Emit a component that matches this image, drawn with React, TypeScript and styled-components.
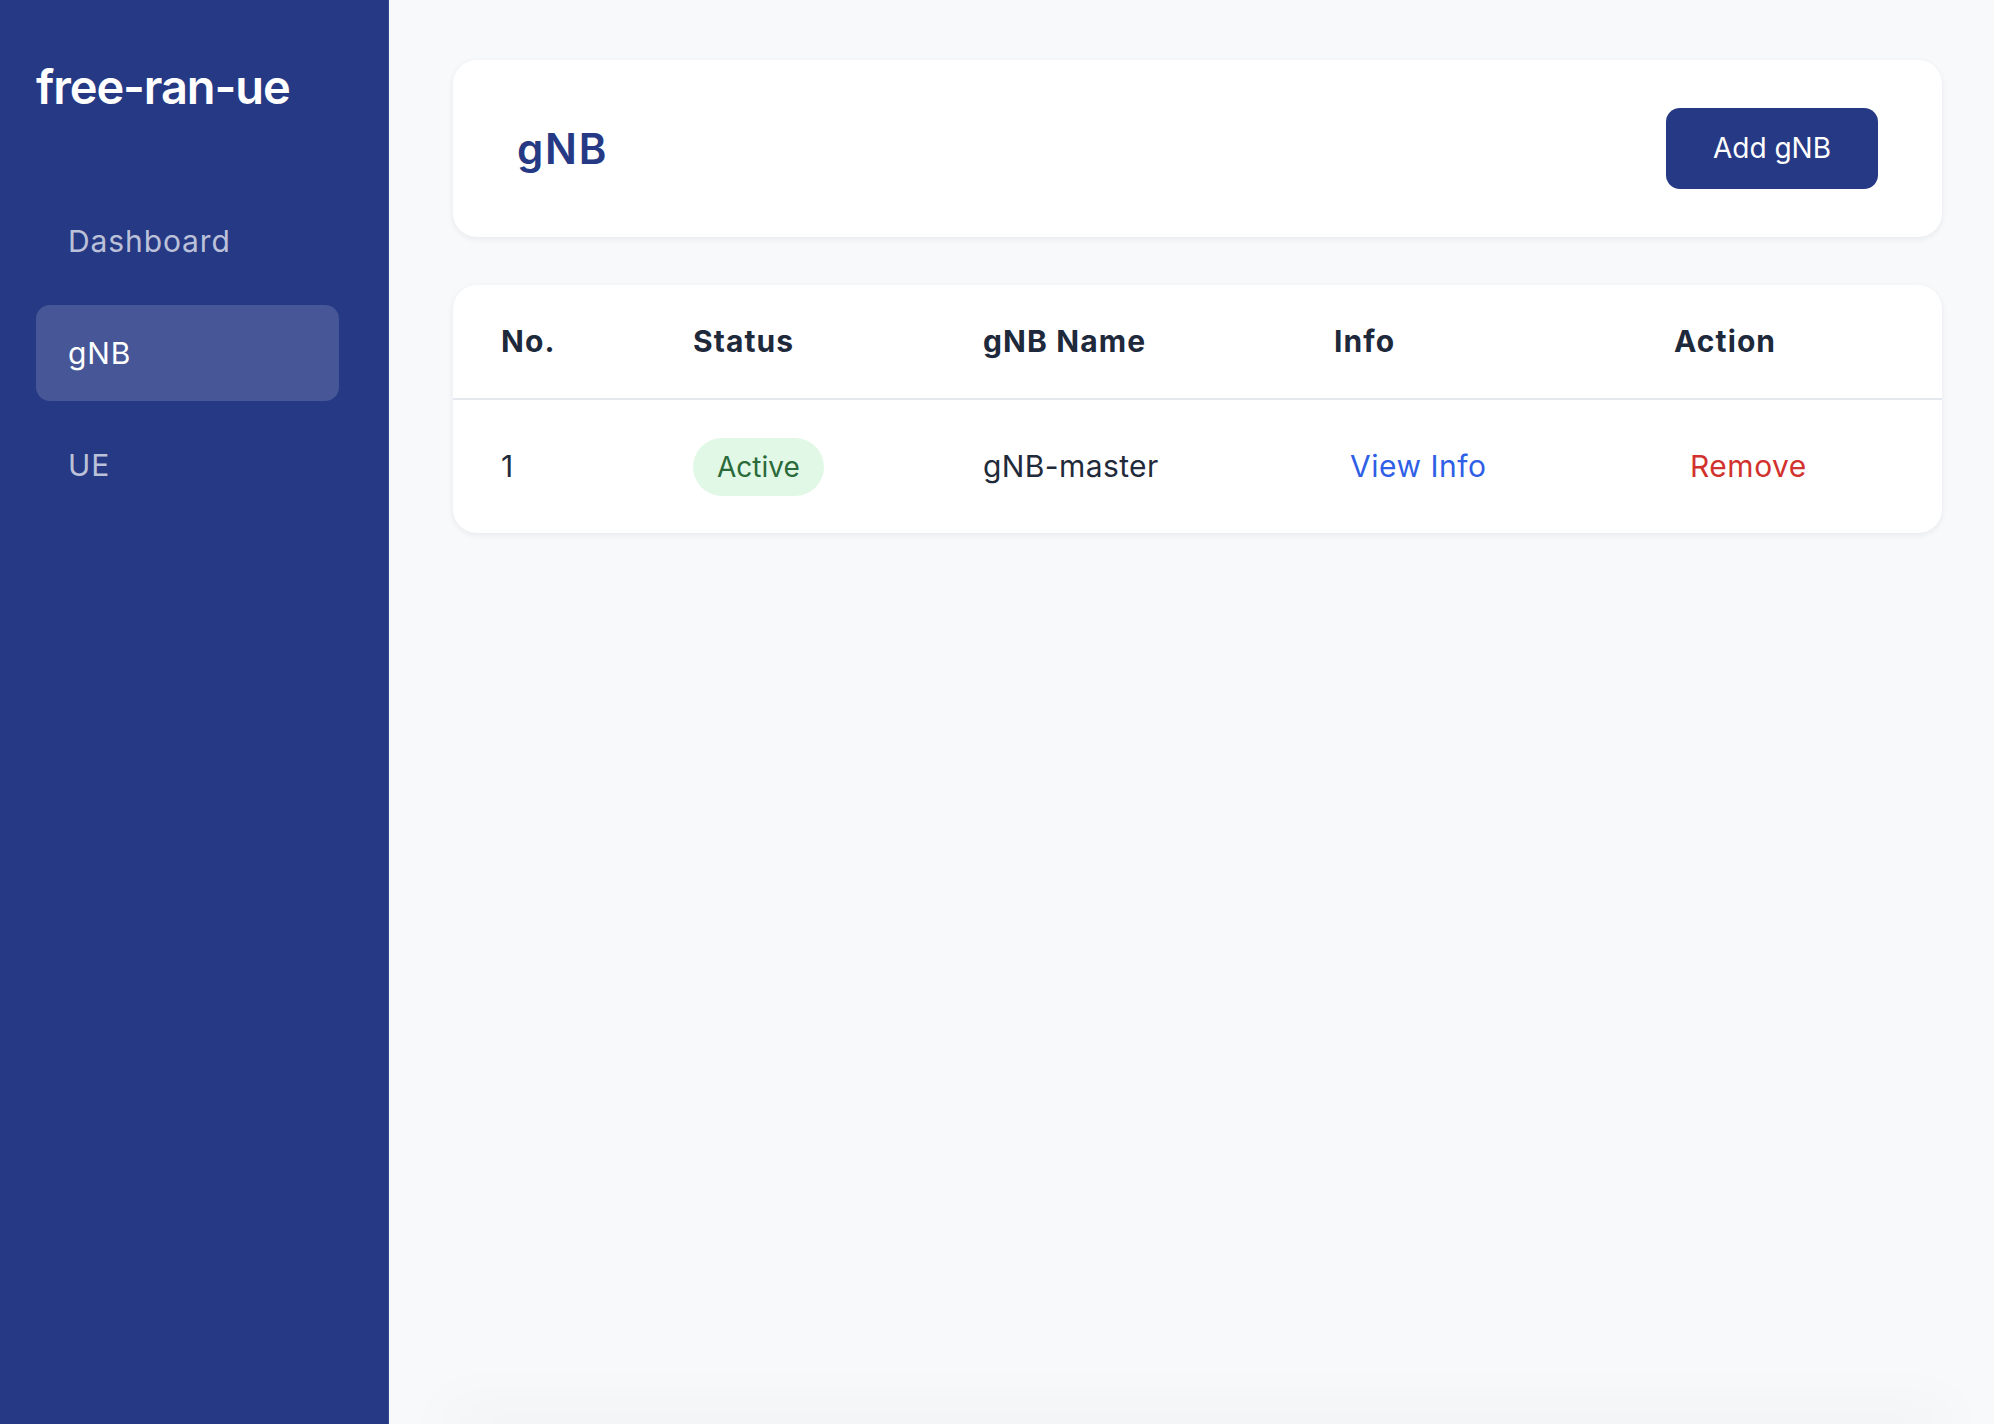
import React from "react";
import styled, { createGlobalStyle } from "styled-components";

const GlobalStyle = createGlobalStyle`
  * { box-sizing: border-box; }
  html, body { margin: 0; padding: 0; }
  body {
    font-family: Inter, "Noto Sans", "Liberation Sans", sans-serif;
    background: #f8f9fb;
    -webkit-font-smoothing: antialiased;
  }
`;

const Layout = styled.div`
  display: flex;
  width: 100vw;
  height: 100vh;
  overflow: hidden;
`;

const Sidebar = styled.aside`
  flex: 0 0 389px;
  background: #263984;
  border-right: 1px solid #34478f;
  padding: 58px 49px 0 36px;
  display: flex;
  flex-direction: column;
`;

const Brand = styled.div`
  color: #ffffff;
  font-size: 47px;
  line-height: 58px;
  font-weight: 600;
  letter-spacing: -1.1px;
  margin-bottom: 77px;
`;

const Nav = styled.nav`
  display: flex;
  flex-direction: column;
  gap: 16px;
`;

const NavItem = styled.a<{ $active?: boolean }>`
  display: block;
  height: 96px;
  padding: 24px 32px;
  font-size: 30px;
  line-height: 48px;
  letter-spacing: 0.9px;
  border-radius: 14px;
  text-decoration: none;
  color: ${(p) => (p.$active ? "#ffffff" : "rgba(255,255,255,0.7)")};
  background: ${(p) => (p.$active ? "rgba(255,255,255,0.15)" : "transparent")};
`;

const Main = styled.main`
  flex: 1;
  display: flex;
  flex-direction: column;
  gap: 48px;
  padding: 60px 52px 0 64px;
  background: #f8f9fb;
  overflow: hidden;
`;

const Card = styled.section`
  background: #ffffff;
  border-radius: 24px;
  box-shadow: 0 2px 6px rgba(15, 23, 42, 0.07);
  flex-shrink: 0;
`;

const HeaderCard = styled(Card)`
  display: flex;
  align-items: center;
  justify-content: space-between;
  padding: 48px 64px 48px 64px;
`;

const PageTitle = styled.h1`
  margin: 0;
  color: #263984;
  font-size: 42px;
  line-height: 50px;
  font-weight: 600;
  letter-spacing: 1.8px;
`;

const PrimaryButton = styled.button`
  border: none;
  background: #263984;
  color: #ffffff;
  font-family: inherit;
  font-size: 28px;
  line-height: 33px;
  font-weight: 400;
  white-space: nowrap;
  padding: 24px 47px;
  border-radius: 14px;
  cursor: pointer;
`;

const COLS = "192px 290px 351px 340px 1fr";

const HeadRow = styled.div`
  display: grid;
  grid-template-columns: ${COLS};
  align-items: center;
  height: 115px;
  border-bottom: 2px solid #e5e8ee;
`;

const HeadCell = styled.div`
  padding: 0 48px;
  font-size: 30px;
  line-height: 45px;
  font-weight: 700;
  letter-spacing: 1.1px;
  color: #1e293b;
`;

const BodyRow = styled.div`
  display: grid;
  grid-template-columns: ${COLS};
  align-items: center;
  height: 133px;
`;

const Cell = styled.div`
  padding: 0 48px;
  font-size: 30px;
  line-height: 45px;
  letter-spacing: 0.4px;
  color: #1f2a3b;
`;

const Badge = styled.span`
  display: inline-block;
  padding: 8px 24px;
  font-size: 28px;
  line-height: 42px;
  letter-spacing: 0;
  border-radius: 999px;
  background: #e1f8e6;
  color: #2b6a3a;
`;

const LinkButton = styled.button<{ $tone: "info" | "danger" }>`
  border: none;
  background: transparent;
  padding: 8px 16px;
  font-family: inherit;
  font-size: 30px;
  line-height: 45px;
  letter-spacing: 0.5px;
  cursor: pointer;
  color: ${(p) => (p.$tone === "info" ? "#2f5fe6" : "#d2322d")};
`;

const BelowFold = styled.div`
  margin-top: auto;
  height: 0;
  flex-shrink: 0;
  box-shadow: 0 0 60px 8px rgba(15, 23, 42, 0.08);
`;

const gnbs = [{ no: 1, status: "Active", name: "gNB-master" }];

export default function App() {
  return (
    <>
      <GlobalStyle />
      <Layout>
        <Sidebar>
          <Brand>free-ran-ue</Brand>
          <Nav>
            <NavItem href="#">Dashboard</NavItem>
            <NavItem href="#" $active>
              gNB
            </NavItem>
            <NavItem href="#">UE</NavItem>
          </Nav>
        </Sidebar>
        <Main>
          <HeaderCard>
            <PageTitle>gNB</PageTitle>
            <PrimaryButton>Add gNB</PrimaryButton>
          </HeaderCard>
          <Card>
            <HeadRow>
              <HeadCell>No.</HeadCell>
              <HeadCell>Status</HeadCell>
              <HeadCell>gNB Name</HeadCell>
              <HeadCell>Info</HeadCell>
              <HeadCell>Action</HeadCell>
            </HeadRow>
            {gnbs.map((g) => (
              <BodyRow key={g.no}>
                <Cell>{g.no}</Cell>
                <Cell>
                  <Badge>{g.status}</Badge>
                </Cell>
                <Cell>{g.name}</Cell>
                <Cell>
                  <LinkButton $tone="info">View Info</LinkButton>
                </Cell>
                <Cell>
                  <LinkButton $tone="danger">Remove</LinkButton>
                </Cell>
              </BodyRow>
            ))}
          </Card>
          <BelowFold />
        </Main>
      </Layout>
    </>
  );
}
